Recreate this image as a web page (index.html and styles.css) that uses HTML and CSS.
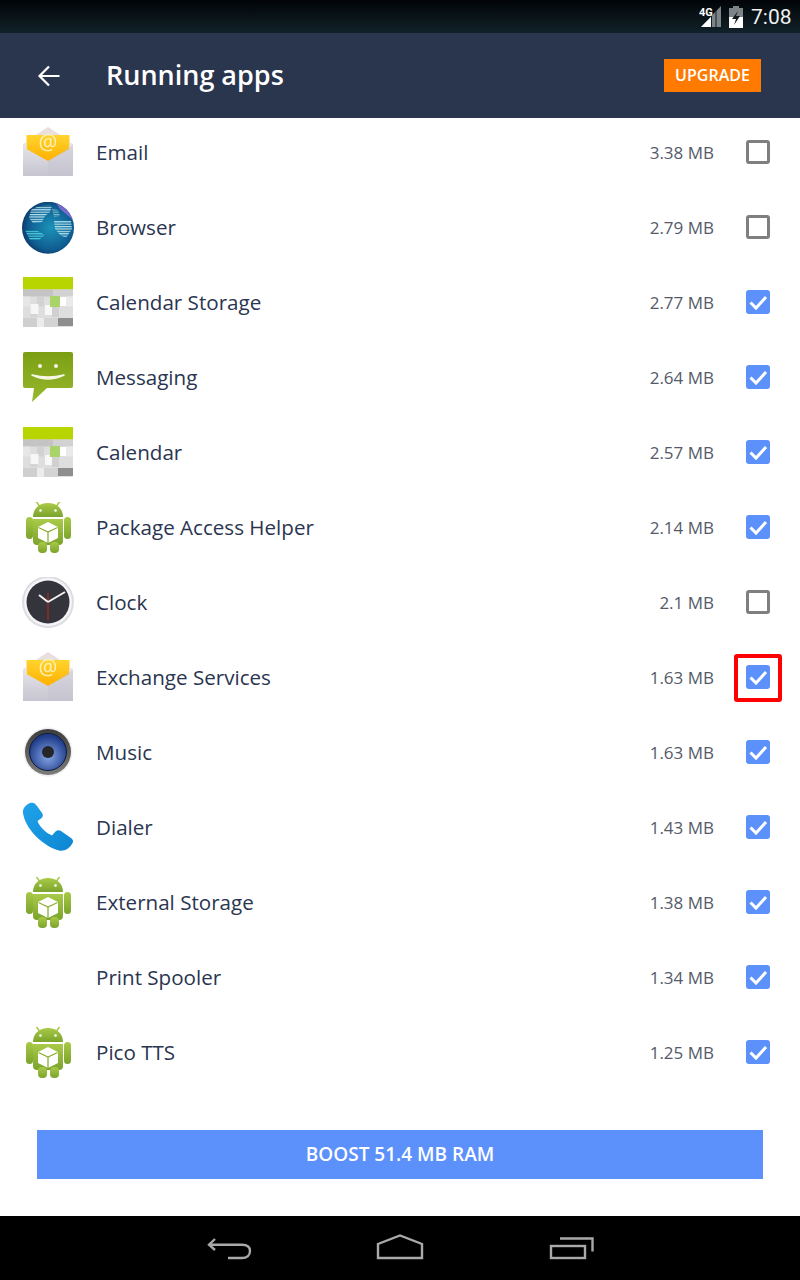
FILE: index.html
```html
<!DOCTYPE html>
<html lang="en">
<head>
  <meta charset="UTF-8">
  <meta name="viewport" content="width=device-width, initial-scale=1.0">
  <title>Running apps</title>
  <link rel="stylesheet" href="styles.css">
</head>
<body>
  <svg class="defs" width="0" height="0">
    <defs>
      <linearGradient id="envBody" x1="0" y1="0" x2="0" y2="1"><stop offset="0" stop-color="#e8e6ea"/><stop offset="1" stop-color="#c6c5d1"/></linearGradient>
      <linearGradient id="paper" x1="0" y1="0" x2="0" y2="1"><stop offset="0" stop-color="#ffd42e"/><stop offset="1" stop-color="#ffb000"/></linearGradient>
      <radialGradient id="globeFill" cx="0.55" cy="0.5" r="0.6"><stop offset="0" stop-color="#1c93b8"/><stop offset="0.7" stop-color="#0f5d92"/><stop offset="1" stop-color="#0b2f5a"/></radialGradient>
      <pattern id="stripes" width="3" height="2.4" patternUnits="userSpaceOnUse"><rect width="3" height="1.200" fill="#b5e2ee"/></pattern>
      <pattern id="stripesTeal" width="3" height="2.4" patternUnits="userSpaceOnUse"><rect width="3" height="1.200" fill="#49d0dc"/></pattern>
      <linearGradient id="msgFill" x1="0" y1="0" x2="0" y2="1"><stop offset="0" stop-color="#7b9f12"/><stop offset="1" stop-color="#98b82e"/></linearGradient>
      <linearGradient id="droidFill" x1="0" y1="0" x2="0" y2="1"><stop offset="0" stop-color="#a9ca47"/><stop offset="1" stop-color="#7ba32c"/></linearGradient>
      <radialGradient id="coneFill" cx="0.5" cy="0.62" r="0.55"><stop offset="0" stop-color="#86a6e6"/><stop offset="1" stop-color="#1f3d8a"/></radialGradient>
      <linearGradient id="rimFill" x1="0" y1="0" x2="0" y2="1"><stop offset="0" stop-color="#3c3c3c"/><stop offset="1" stop-color="#7c7c7c"/></linearGradient>
      <linearGradient id="phoneFill" x1="0" y1="0" x2="1" y2="1"><stop offset="0" stop-color="#1fa3ea"/><stop offset="1" stop-color="#0e86d2"/></linearGradient>

      <symbol id="i-email" viewBox="0 0 52 52">
        <path d="M26 0 L46 13 L46 30 L6 30 L6 13Z" fill="#e9dfdc"/>
        <rect x="4.500" y="8" width="43" height="26" fill="url(#paper)"/>
        <path d="M1 17 L4.500 15 L4.500 22 L26 34 L47.500 22 L47.500 15 L51 17 L51 49 L1 49Z" fill="url(#envBody)"/>
        <path d="M26 34 L51 18 L51 49 L26 49Z" fill="#c2c1cd" opacity="0.4"/>
        <text x="26" y="23" class="at">@</text>
      </symbol>

      <symbol id="i-globe" viewBox="0 0 52 52">
        <circle cx="26" cy="25.700" r="26" fill="url(#globeFill)"/>
        <path d="M34 1 C41 3 48 10 51 18 L44 12 L38 7Z" fill="#9a6fe0" opacity="0.75"/>
        <path d="M9 8 C14 4 22 3 30 4 L28 10 L23 14 L20 20 L11 21 L7 16Z" fill="url(#stripes)"/>
        <path d="M32 19 L49 19 L50 27 L44 36 L38 33 L33 27Z" fill="url(#stripes)"/>
        <path d="M3 28 L14 28 L23 33 L17 38 L8 38Z" fill="url(#stripesTeal)"/>
        <path d="M30 7 L36 8 L38 14 L32 15Z" fill="url(#stripes)" opacity="0.7"/>
      </symbol>

      <symbol id="i-calendar" viewBox="0 0 52 52">
        <rect x="1" y="0" width="50" height="50" rx="1.500" fill="#dedede"/>
        <rect x="1" y="0" width="50" height="12.500" fill="#b9d500"/>
        <rect x="1" y="12.500" width="30" height="7" fill="#c4c4c4"/>
        <rect x="31" y="12.500" width="20" height="7" fill="#d2d2d2"/>
        <rect x="1" y="19.500" width="7" height="10" fill="#e6e6e6"/>
        <rect x="15" y="19.500" width="7" height="10" fill="#d2d2d2"/>
        <rect x="8" y="30" width="7" height="10" fill="#d4d4d4"/>
        <rect x="30" y="30" width="7" height="10" fill="#d0d0d0"/>
        <rect x="44" y="19.500" width="7" height="10" fill="#eaeaea"/>
        <rect x="8.500" y="27" width="8" height="10" fill="#f6f6f6"/>
        <rect x="23" y="28" width="7" height="10" fill="#f8f8f8"/>
        <rect x="38" y="20" width="6" height="9" fill="#ffffff"/>
        <rect x="28" y="19" width="10" height="11" fill="#a9d46a"/>
        <rect x="1" y="41" width="14" height="9" fill="#cfcfcf"/>
        <rect x="15" y="41" width="7" height="9" fill="#ececec"/>
        <rect x="22" y="41" width="14" height="9" fill="#d4d4d4"/>
        <rect x="36" y="41" width="15" height="8" fill="#8e8e8e"/>
      </symbol>

      <symbol id="i-msg" viewBox="0 0 52 52">
        <path d="M3 0 H49 Q51 0 51 2 V34 Q51 36 49 36 H25 L10 50 L12 36 H3 Q1 36 1 34 V2 Q1 0 3 0Z" fill="url(#msgFill)"/>
        <circle cx="18" cy="14" r="2" fill="#f4f7e6"/>
        <circle cx="34" cy="14" r="2" fill="#f4f7e6"/>
        <path d="M10 23 Q26 31 42 23 Q26 27 10 23Z" fill="#f4f7e6" stroke="#f4f7e6" stroke-width="1.600" stroke-linejoin="round"/>
      </symbol>

      <symbol id="i-droid" viewBox="0 0 52 52">
        <path d="M14 -1 L18 5 M38 -1 L34 5" stroke="#a5c83f" stroke-width="1.500" fill="none"/>
        <path d="M11 15 C11 6 18 1 26 1 C34 1 41 6 41 15Z" fill="url(#droidFill)"/>
        <circle cx="18.500" cy="8.500" r="1.300" fill="#fff"/>
        <circle cx="33.500" cy="8.500" r="1.300" fill="#fff"/>
        <path d="M11 17 H41 V39 Q41 43 37 43 H15 Q11 43 11 39Z" fill="url(#droidFill)"/>
        <rect x="4" y="15" width="7" height="22" rx="3.500" fill="url(#droidFill)"/>
        <rect x="42" y="15" width="7" height="22" rx="3.500" fill="url(#droidFill)"/>
        <rect x="16" y="40" width="9" height="11" rx="4" fill="url(#droidFill)"/>
        <rect x="28" y="40" width="9" height="11" rx="4" fill="url(#droidFill)"/>
        <path d="M26 20 L36 25 L36 36 L26 41 L16 36 L16 25Z" fill="#fff"/>
        <path d="M16.500 25.500 L26 30 L35.500 25.500 M26 30 V41" stroke="#8bb02f" stroke-width="1.300" fill="none"/>
      </symbol>

      <symbol id="i-clock" viewBox="0 0 52 52">
        <circle cx="26" cy="25" r="26" fill="#dcdce2"/>
        <circle cx="26" cy="25" r="24" fill="#f5f5f7"/>
        <circle cx="26" cy="25" r="21.500" fill="#34343c"/>
        <path d="M26 16 V43" stroke="#a32a22" stroke-width="1.300"/>
        <path d="M26 25 L43 15" stroke="#f2f2f2" stroke-width="2"/>
        <path d="M26 25 L17 18" stroke="#f2f2f2" stroke-width="2"/>
      </symbol>

      <symbol id="i-music" viewBox="0 0 52 52">
        <circle cx="26" cy="25" r="24.500" fill="#d8d8d8" opacity="0.4"/>
        <circle cx="26" cy="25" r="23" fill="url(#rimFill)"/>
        <circle cx="26" cy="25" r="18.500" fill="url(#coneFill)" stroke="#0e1a3a" stroke-width="1"/>
        <circle cx="26" cy="25" r="6" fill="#26262a"/>
      </symbol>

      <symbol id="i-phone" viewBox="0 0 52 52">
        <path d="M8 1 C11 0 13 1 15 4 L20 11 C21.500 13 21 15 19 16.500 L15.500 19 C17 24 24 31 30 33.500 L33 30 C35 28 37 27.500 39 29 L49 36 C51.500 38 51.500 40 50 42 C47 47 42 49.500 37 48.500 C20 44 3 26 1 11 C0.500 6 4 3 8 1Z" fill="url(#phoneFill)"/>
      </symbol>

      <symbol id="i-check" viewBox="0 0 24 24">
        <path d="M4.500 12.500 L10 18 L20 7" fill="none" stroke="#fff" stroke-width="3"/>
      </symbol>
    </defs>
  </svg>

  <div class="status">
    <div class="signal">
      <svg width="22" height="22" viewBox="0 0 22 22">
        <path d="M21 0 V21 H1Z" fill="#7d8487"/>
        <path d="M11 11 V21 H1Z" fill="#fff"/>
        <path d="M11.500 9 V21 M16 4 V21" stroke="#10202a" stroke-width="1"/>
      </svg>
      <span class="net">4G</span>
    </div>
    <svg class="battery" width="14" height="22" viewBox="0 0 14 22">
      <rect x="4" y="0" width="6" height="2" fill="#7d8487"/>
      <rect x="0" y="2" width="14" height="20" fill="#7d8487"/>
      <rect x="0" y="11" width="14" height="11" fill="#fff"/>
      <path d="M9 5 L3 13 H7 L5 19 L11 10 H7Z" fill="#12191d"/>
    </svg>
    <span class="time">7:08</span>
  </div>

  <header class="topbar">
    <svg class="back" width="24" height="24" viewBox="0 0 24 24">
      <path d="M22.500 12 H3 M12 2.500 L2.500 12 L12 21.500" fill="none" stroke="#fff" stroke-width="2.200"/>
    </svg>
    <h1 class="title">Running apps</h1>
    <a class="upgrade">UPGRADE</a>
  </header>

  <main class="content">
    <ul class="apps">
      <li class="app"><svg class="icon"><use href="#i-email"/></svg><span class="name">Email</span><span class="size">3.38 MB</span><span class="box"></span></li>
      <li class="app"><svg class="icon"><use href="#i-globe"/></svg><span class="name">Browser</span><span class="size">2.79 MB</span><span class="box"></span></li>
      <li class="app"><svg class="icon"><use href="#i-calendar"/></svg><span class="name">Calendar Storage</span><span class="size">2.77 MB</span><span class="box on"><svg><use href="#i-check"/></svg></span></li>
      <li class="app"><svg class="icon"><use href="#i-msg"/></svg><span class="name">Messaging</span><span class="size">2.64 MB</span><span class="box on"><svg><use href="#i-check"/></svg></span></li>
      <li class="app"><svg class="icon"><use href="#i-calendar"/></svg><span class="name">Calendar</span><span class="size">2.57 MB</span><span class="box on"><svg><use href="#i-check"/></svg></span></li>
      <li class="app"><svg class="icon"><use href="#i-droid"/></svg><span class="name">Package Access Helper</span><span class="size">2.14 MB</span><span class="box on"><svg><use href="#i-check"/></svg></span></li>
      <li class="app"><svg class="icon"><use href="#i-clock"/></svg><span class="name">Clock</span><span class="size">2.1 MB</span><span class="box"></span></li>
      <li class="app"><svg class="icon"><use href="#i-email"/></svg><span class="name">Exchange Services</span><span class="size">1.63 MB</span><span class="box on marked"><svg><use href="#i-check"/></svg></span></li>
      <li class="app"><svg class="icon"><use href="#i-music"/></svg><span class="name">Music</span><span class="size">1.63 MB</span><span class="box on"><svg><use href="#i-check"/></svg></span></li>
      <li class="app"><svg class="icon"><use href="#i-phone"/></svg><span class="name">Dialer</span><span class="size">1.43 MB</span><span class="box on"><svg><use href="#i-check"/></svg></span></li>
      <li class="app"><svg class="icon"><use href="#i-droid"/></svg><span class="name">External Storage</span><span class="size">1.38 MB</span><span class="box on"><svg><use href="#i-check"/></svg></span></li>
      <li class="app"><span class="icon"></span><span class="name">Print Spooler</span><span class="size">1.34 MB</span><span class="box on"><svg><use href="#i-check"/></svg></span></li>
      <li class="app"><svg class="icon"><use href="#i-droid"/></svg><span class="name">Pico TTS</span><span class="size">1.25 MB</span><span class="box on"><svg><use href="#i-check"/></svg></span></li>
    </ul>
    <button class="boost">BOOST 51.4 MB RAM</button>
  </main>

  <nav class="navbar">
    <svg width="48" height="32" viewBox="0 0 48 32">
      <path d="M9 7 L3 12.700 L9 18 M3 12.700 H36 C41 12.700 44 15 44 19 C44 23 41 26 36 26 H22" fill="none" stroke="#a9a9a9" stroke-width="2.400"/>
    </svg>
    <svg width="48" height="32" viewBox="0 0 48 32">
      <path d="M2 26 V12 L24 3.500 L46 12 V26Z" fill="none" stroke="#a9a9a9" stroke-width="2.400"/>
    </svg>
    <svg width="48" height="32" viewBox="0 0 48 32">
      <rect x="5" y="14" width="34" height="12" fill="none" stroke="#a9a9a9" stroke-width="2.400"/>
      <path d="M14 6.500 H46.500 V19.500" fill="none" stroke="#a9a9a9" stroke-width="2.400"/>
    </svg>
  </nav>
</body>
</html>
```

FILE: styles.css
```css
* {
  box-sizing: border-box;
}

body {
  margin: 0;
  height: 1280px;
  display: flex;
  flex-direction: column;
  background: #fff;
  font-family: "Open Sans", sans-serif;
  color: #2a3550;
}

.defs {
  position: absolute;
}

.at {
  font-family: "Open Sans", sans-serif;
  font-size: 21px;
  fill: #fff1b8;
  text-anchor: middle;
}

/* status bar */
.status {
  height: 33px;
  display: flex;
  align-items: center;
  justify-content: flex-end;
  padding: 0 8px 0 0;
  background: linear-gradient(#010406, #11222a);
  color: #eef0f0;
}

.signal {
  position: relative;
  width: 22px;
  height: 22px;
  margin-right: 7px;
}

.signal svg {
  display: block;
}

.net {
  position: absolute;
  left: -1px;
  top: 0;
  font-family: "Roboto", sans-serif;
  font-size: 11px;
  font-weight: 700;
  line-height: 14px;
  color: #fff;
}

.battery {
  margin-right: 8px;
}

.time {
  font-family: "Roboto", sans-serif;
  font-size: 21px;
  width: 41px;
}

/* app bar */
.topbar {
  height: 85px;
  display: flex;
  align-items: center;
  padding: 0 39px 0 37px;
  background: #2a354e;
  color: #fff;
}

.title {
  margin: 0 0 2px 45px;
  flex: 1;
  font-size: 27px;
  font-weight: 600;
}

.upgrade {
  width: 97px;
  height: 33px;
  background: #ff7a00;
  color: #fff;
  font-size: 16px;
  font-weight: 600;
  line-height: 33px;
  text-align: center;
}

/* list */
.content {
  flex: 1;
  overflow: hidden;
}

.apps {
  list-style: none;
  margin: -2.5px 0 0;
  padding: 0;
}

.app {
  height: 75px;
  display: flex;
  align-items: center;
  padding: 0 30px 0 22px;
}

.icon {
  width: 52px;
  height: 52px;
  flex: none;
  overflow: visible;
  filter: blur(0.4px);
}

.name {
  flex: 1;
  margin-left: 22px;
  padding-bottom: 2px;
  font-size: 20.6px;
  font-weight: 500;
}

.size {
  padding-bottom: 2px;
  font-size: 17px;
  color: #555a68;
}

.box {
  position: relative;
  width: 24px;
  height: 24px;
  margin: 0 0 2px 32px;
  border: 3px solid #7f7f7f;
  border-radius: 3px;
}

.box.on {
  border: 0;
  background: #5c90fb;
}

.box svg {
  display: block;
  width: 24px;
  height: 24px;
}

.marked::after {
  content: "";
  position: absolute;
  left: -12px;
  top: -11px;
  width: 48px;
  height: 48px;
  box-sizing: border-box;
  border: 4px solid #f00;
  border-radius: 3px;
}

.boost {
  display: block;
  width: 726px;
  height: 49px;
  margin: 39px 0 0 37px;
  border: none;
  background: #5c90fb;
  color: #fff;
  font-family: "Open Sans", sans-serif;
  font-size: 19px;
  font-weight: 600;
}

/* soft keys */
.navbar {
  height: 64px;
  display: flex;
  align-items: center;
  gap: 122px;
  padding-left: 206px;
  background: #000;
}
```
